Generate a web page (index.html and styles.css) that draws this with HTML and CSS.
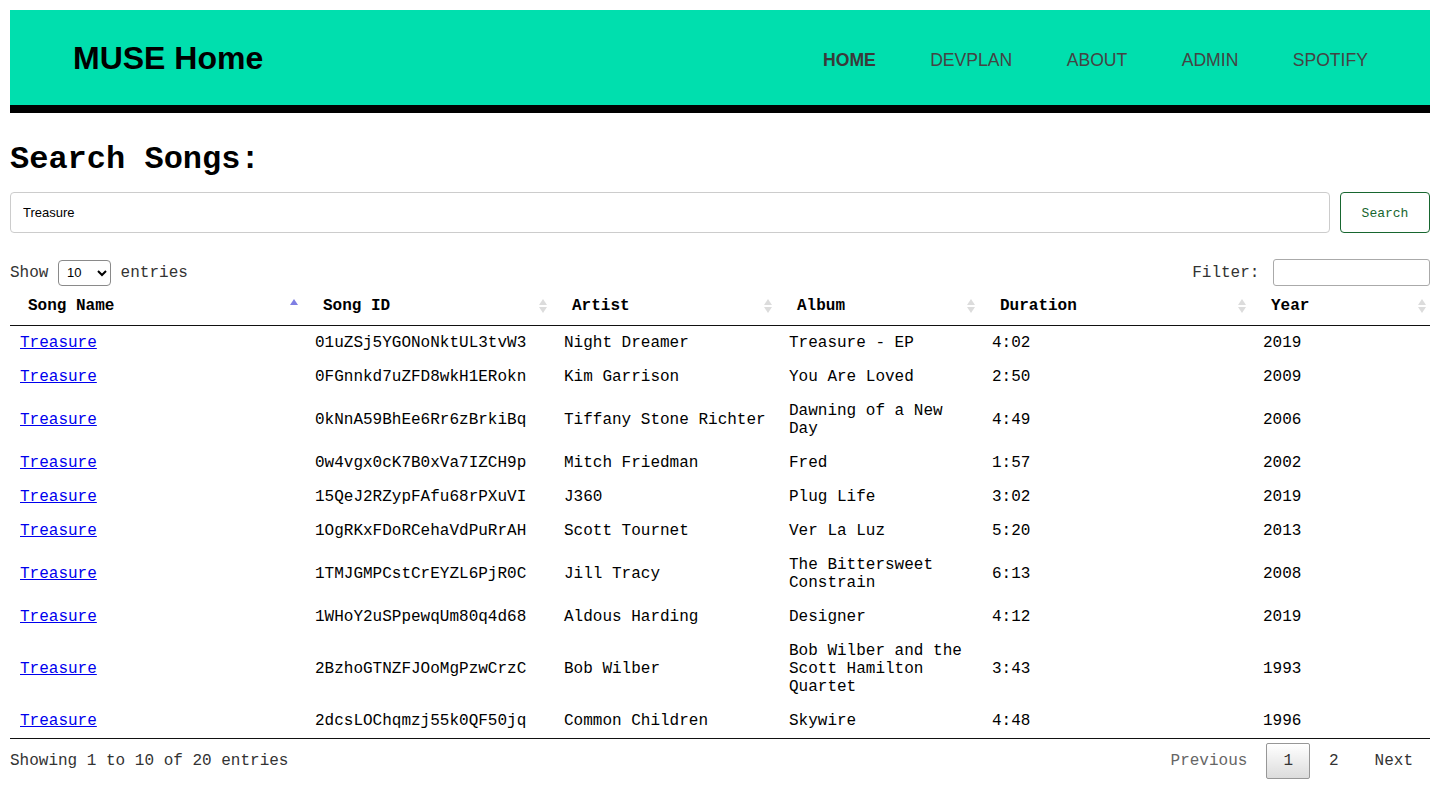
FILE: index.html
```html
<!DOCTYPE html>
<html lang="en">
<head>
<meta charset="utf-8">
<title>MUSE Home</title>
<link rel="stylesheet" href="styles.css">
</head>
<body>
<header class="topbar">
  <div class="brand">MUSE Home</div>
  <nav class="nav">
    <a class="nav-link active" href="#">HOME</a>
    <a class="nav-link" href="#">DEVPLAN</a>
    <a class="nav-link" href="#">ABOUT</a>
    <a class="nav-link" href="#">ADMIN</a>
    <a class="nav-link" href="#">SPOTIFY</a>
  </nav>
</header>
<main class="content">
  <h1 class="page-title">Search Songs:</h1>
  <form class="search-form">
    <input class="search-input" type="text" value="Treasure">
    <button class="search-btn" type="button">Search</button>
  </form>
  <div class="dt-top">
    <label class="dt-length">Show <select class="dt-select"><option>10</option><option>25</option><option>50</option><option>100</option></select> entries</label>
    <label class="dt-filter">Filter: <input class="filter-input" type="search"></label>
  </div>
  <table class="songs">
    <colgroup>
      <col class="c-name"><col class="c-id"><col class="c-artist"><col class="c-album"><col class="c-dur"><col class="c-year">
    </colgroup>
    <thead>
      <tr>
        <th>Song Name<span class="sort asc"></span></th>
        <th>Song ID<span class="sort"></span></th>
        <th>Artist<span class="sort"></span></th>
        <th>Album<span class="sort"></span></th>
        <th>Duration<span class="sort"></span></th>
        <th>Year<span class="sort"></span></th>
      </tr>
    </thead>
    <tbody>
      <tr><td><a href="#">Treasure</a></td><td>01uZSj5YGONoNktUL3tvW3</td><td>Night Dreamer</td><td>Treasure - EP</td><td>4:02</td><td>2019</td></tr>
      <tr><td><a href="#">Treasure</a></td><td>0FGnnkd7uZFD8wkH1ERokn</td><td>Kim Garrison</td><td>You Are Loved</td><td>2:50</td><td>2009</td></tr>
      <tr><td><a href="#">Treasure</a></td><td>0kNnA59BhEe6Rr6zBrkiBq</td><td>Tiffany Stone Richter</td><td>Dawning of a New Day</td><td>4:49</td><td>2006</td></tr>
      <tr><td><a href="#">Treasure</a></td><td>0w4vgx0cK7B0xVa7IZCH9p</td><td>Mitch Friedman</td><td>Fred</td><td>1:57</td><td>2002</td></tr>
      <tr><td><a href="#">Treasure</a></td><td>15QeJ2RZypFAfu68rPXuVI</td><td>J360</td><td>Plug Life</td><td>3:02</td><td>2019</td></tr>
      <tr><td><a href="#">Treasure</a></td><td>1OgRKxFDoRCehaVdPuRrAH</td><td>Scott Tournet</td><td>Ver La Luz</td><td>5:20</td><td>2013</td></tr>
      <tr><td><a href="#">Treasure</a></td><td>1TMJGMPCstCrEYZL6PjR0C</td><td>Jill Tracy</td><td>The Bittersweet Constrain</td><td>6:13</td><td>2008</td></tr>
      <tr><td><a href="#">Treasure</a></td><td>1WHoY2uSPpewqUm80q4d68</td><td>Aldous Harding</td><td>Designer</td><td>4:12</td><td>2019</td></tr>
      <tr><td><a href="#">Treasure</a></td><td>2BzhoGTNZFJOoMgPzwCrzC</td><td>Bob Wilber</td><td>Bob Wilber and the Scott Hamilton Quartet</td><td>3:43</td><td>1993</td></tr>
      <tr><td><a href="#">Treasure</a></td><td>2dcsLOChqmzj55k0QF50jq</td><td>Common Children</td><td>Skywire</td><td>4:48</td><td>1996</td></tr>
    </tbody>
  </table>
  <div class="dt-bottom">
    <div class="dt-info">Showing 1 to 10 of 20 entries</div>
    <div class="dt-paginate">
      <a class="page-btn disabled">Previous</a>
      <a class="page-btn current">1</a>
      <a class="page-btn">2</a>
      <a class="page-btn">Next</a>
    </div>
  </div>
</main>
</body>
</html>
```

FILE: styles.css
```css
html, body {
  margin: 0;
  padding: 0;
}
body {
  margin: 10px;
  font-family: "Liberation Mono", "Courier New", monospace;
  font-size: 16px;
  color: #000;
  background: #fff;
}

/* Top bar */
.topbar {
  display: flex;
  align-items: center;
  justify-content: space-between;
  height: 95px;
  background: #00dfae;
  border-bottom: 8px solid #000;
  padding: 0 35px 0 63px;
}
.brand {
  font-family: "Liberation Sans", Arial, sans-serif;
  font-weight: bold;
  font-size: 32px;
  color: #000;
  padding-top: 1px;
}
.nav {
  display: flex;
  align-items: center;
  padding-top: 6px;
}
.nav-link {
  font-family: "Liberation Sans", Arial, sans-serif;
  font-size: 17.6px;
  color: #444;
  text-decoration: none;
  padding: 0 27.2px;
}
.nav-link:last-child {
  padding-right: 27px;
}
.nav-link.active {
  font-weight: bold;
  color: #3a3a3a;
}

/* Title and search */
.page-title {
  font-family: "Liberation Mono", "Courier New", monospace;
  font-weight: bold;
  font-size: 32px;
  line-height: 36px;
  margin: 29px 0 14px;
}
.search-form {
  display: flex;
  margin: 0;
}
.search-input {
  flex: 1;
  height: 41px;
  box-sizing: border-box;
  border: 1px solid #cccccc;
  border-radius: 4px;
  padding: 0 12px;
  font-family: "Liberation Sans", Arial, sans-serif;
  font-size: 13px;
  color: #000;
}
.search-btn {
  width: 90px;
  height: 41px;
  margin-left: 10px;
  box-sizing: border-box;
  background: #fff;
  border: 1px solid #17662f;
  border-radius: 4px;
  color: #17662f;
  font-family: "Liberation Mono", "Courier New", monospace;
  font-size: 13px;
  padding-top: 3px;
}

/* DataTables controls */
.dt-top {
  display: flex;
  justify-content: space-between;
  align-items: flex-start;
  margin-top: 26px;
  height: 28px;
  color: #333;
}
.dt-length, .dt-filter {
  display: flex;
  align-items: center;
  white-space: pre;
  height: 27px;
}
.dt-select {
  width: 53px;
  height: 26px;
  font-family: "Liberation Sans", Arial, sans-serif;
  font-size: 13px;
  border: 1px solid #8a8a8a;
  border-radius: 4px;
  background: #fff;
  padding: 0 4px;
  color: #000;
}
.filter-input {
  width: 157px;
  height: 27px;
  box-sizing: border-box;
  margin-left: 4px;
  border: 1px solid #aaa;
  border-radius: 3px;
  padding: 4px;
  background: #fff;
}

/* Table */
.songs {
  width: 1423px;
  table-layout: fixed;
  border-collapse: separate;
  border-spacing: 0;
  border-bottom: 1px solid #111;
}
.c-name { width: 295px; }
.c-id { width: 249px; }
.c-artist { width: 225px; }
.c-album { width: 203px; }
.c-dur { width: 271px; }
.c-year { width: 180px; }

.songs th {
  position: relative;
  text-align: left;
  font-weight: bold;
  padding: 10px 18px;
  border-bottom: 1px solid #111;
  line-height: 18px;
}
.songs td {
  padding: 8px 10px;
  line-height: 18px;
  vertical-align: middle;
}
.songs td a {
  color: #0000ee;
  text-decoration: underline;
}

.sort {
  position: absolute;
  right: 6px;
  top: 12px;
  width: 9px;
  height: 14px;
}
.sort::before, .sort::after {
  content: "";
  position: absolute;
  left: 0;
  width: 0;
  height: 0;
  border-left: 4.5px solid transparent;
  border-right: 4.5px solid transparent;
}
.sort::before {
  top: 0;
  border-bottom: 6px solid #dcdcdc;
}
.sort::after {
  bottom: 0;
  border-top: 6px solid #dcdcdc;
}
.sort.asc::before {
  border-bottom-color: #7f7fe3;
}
.sort.asc::after {
  display: none;
}

/* Footer controls */
.dt-bottom {
  display: flex;
  justify-content: space-between;
  align-items: flex-start;
  color: #333;
}
.dt-info {
  padding-top: 13px;
  line-height: 18px;
}
.dt-paginate {
  display: flex;
  padding-top: 4px;
}
.page-btn {
  box-sizing: border-box;
  min-width: 24px;
  padding: 8px 16px;
  margin-left: 2px;
  line-height: 18px;
  border: 1px solid transparent;
  border-radius: 2px;
  color: #333;
  text-align: center;
}
.page-btn.disabled {
  color: #666;
}
.page-btn.current {
  border: 1px solid #979797;
  background: linear-gradient(to bottom, #ffffff 0%, #dcdcdc 100%);
}
```
